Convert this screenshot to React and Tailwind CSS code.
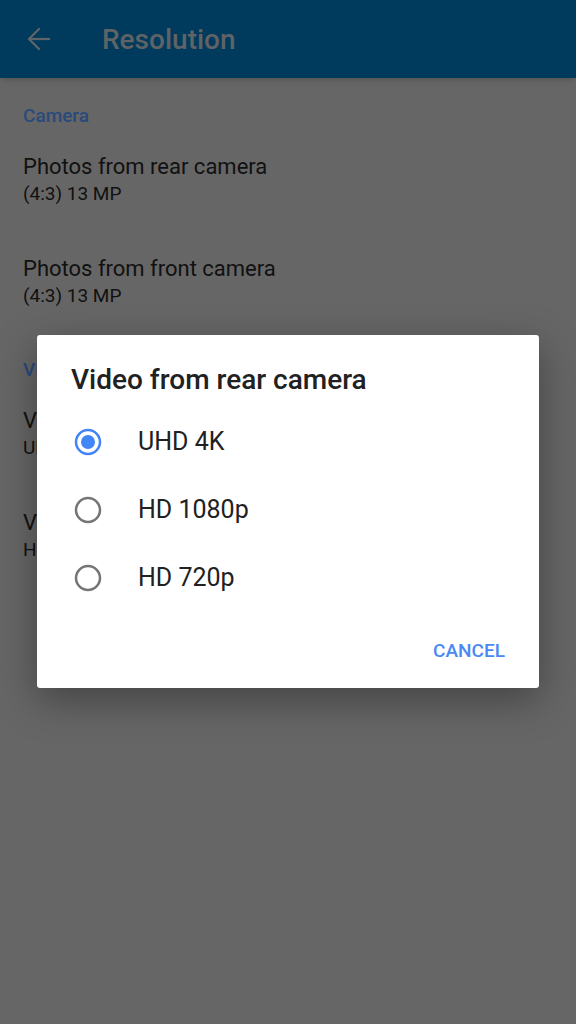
import { useState } from 'react';

const sections = [
    {
        title: 'Camera',
        items: [
            { label: 'Photos from rear camera', value: '(4:3) 13 MP' },
            { label: 'Photos from front camera', value: '(4:3) 13 MP' }
        ]
    },
    {
        title: 'Video',
        items: [
            { label: 'Video from rear camera', value: 'UHD 4K' },
            { label: 'Video from front camera', value: 'HD 1080p' }
        ]
    }
];

const options = ['UHD 4K', 'HD 1080p', 'HD 720p'];

const Radio = ({ checked }) => (
    <svg width="28" height="28" viewBox="0 0 28 28">
        <circle
            cx="14"
            cy="14"
            r="12"
            fill="none"
            stroke={checked ? '#4285f4' : '#757575'}
            strokeWidth="2.5"
        />
        {checked && <circle cx="14" cy="14" r="7" fill="#4285f4" />}
    </svg>
);

const App = () => {
    const [selected, setSelected] = useState('UHD 4K');

    return (
        <div className="relative w-[576px] h-[1024px] overflow-hidden bg-[#666666] font-['Roboto',sans-serif]">
            {/* App bar (dimmed) */}
            <div className="h-[78px] bg-[#003a5c] flex items-center shadow-md">
                <svg
                    className="ml-[27px]"
                    width="24"
                    height="24"
                    viewBox="0 0 24 24"
                    fill="none"
                    stroke="#5e6469"
                    strokeWidth="2.2"
                    strokeLinecap="square"
                >
                    <path d="M22 12H3" />
                    <path d="M12 2L2 12l10 10" />
                </svg>
                <span className="ml-[51px] mt-[2px] text-[28px] leading-[32px] font-medium text-[#5f6366]">Resolution</span>
            </div>

            {/* Settings list (dimmed) */}
            {sections.map((section) => (
                <div key={section.title} className="px-[23px]">
                    <div className="pt-[26px] text-[19px] leading-[24px] font-medium text-[#2a4a7c]">
                        {section.title}
                    </div>
                    {section.items.map((item) => (
                        <div key={item.label} className="py-6 text-[#111111]">
                            <div className="mt-[1px] text-[22px] leading-[28px]">{item.label}</div>
                            <div className="mt-[1px] text-[19px] leading-[24px]">{item.value}</div>
                        </div>
                    ))}
                </div>
            ))}

            {/* Dialog */}
            <div className="absolute left-[37px] top-[335px] w-[502px] h-[353px] bg-white rounded-[3px] shadow-[0_12px_40px_rgba(0,0,0,0.35)] flex flex-col">
                <div className="pt-[29px] pl-[34px] text-[28px] leading-[32px] font-medium text-[#212121]">
                    Video from rear camera
                </div>
                <div className="mt-3">
                    {options.map((opt) => (
                        <button
                            key={opt}
                            onClick={() => setSelected(opt)}
                            className="w-full h-[68px] flex items-center pl-[37px] text-left"
                        >
                            <Radio checked={selected === opt} />
                            <span className="ml-[36px] text-[25px] text-[#212121]">{opt}</span>
                        </button>
                    ))}
                </div>
                <div className="flex-1 flex items-center justify-end pr-[34px] pt-[2px]">
                    <button className="text-[19px] font-medium text-[#4a89f3]">
                        CANCEL
                    </button>
                </div>
            </div>
        </div>
    );
};

export default App;
